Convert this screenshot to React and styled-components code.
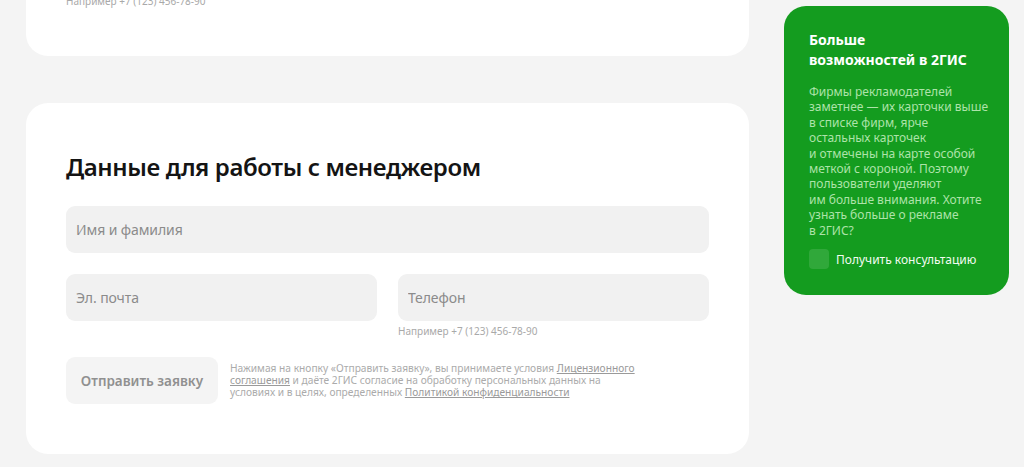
import React from "react";
import styled, { createGlobalStyle } from "styled-components";

const Global = createGlobalStyle`
  html, body { margin: 0; padding: 0; background: #f4f4f4; }
  body { font-family: "Noto Sans", "Open Sans", sans-serif; overflow: hidden; }
  * { box-sizing: border-box; }
`;

const Page = styled.div`
  display: flex;
  align-items: flex-start;
  gap: 35px;
  padding-left: 26px;
  width: 1024px;
  height: 467px;
  overflow: hidden;
`;

const Main = styled.div`
  width: 723px;
  display: flex;
  flex-direction: column;
  gap: 47px;
  margin-top: -80px;
`;

const Card = styled.section`
  background: #fff;
  border-radius: 22px;
  padding: ${(p) => p.$pad};
`;

const Heading = styled.h2`
  margin: 0 0 23px;
  font-size: 24px;
  line-height: 32px;
  font-weight: 600;
  color: #141414;
  letter-spacing: -0.4px;
`;

const Row = styled.div`
  display: grid;
  grid-template-columns: ${(p) => (p.$cols === 2 ? "1fr 1fr" : "1fr")};
  column-gap: 21px;
  margin-bottom: ${(p) => p.$mb || 0}px;
`;

const Field = styled.div`
  display: flex;
  flex-direction: column;
`;

const Input = styled.input`
  height: 47px;
  width: 100%;
  border: none;
  outline: none;
  border-radius: 9px;
  background: #f1f1f1;
  padding: 0 10px;
  font-family: inherit;
  font-size: 14px;
  letter-spacing: -0.1px;
  color: #333;
  &::placeholder { color: #8b8b8b; }
`;

const Hint = styled.div`
  font-size: 10px;
  line-height: 14px;
  color: #a9a9a9;
  margin-top: ${(p) => p.$mt || 3}px;
  white-space: nowrap;
`;

const SubmitRow = styled.div`
  display: flex;
  align-items: flex-start;
  gap: 12px;
  margin-top: 19px;
`;

const SubmitButton = styled.button`
  flex: none;
  width: 152px;
  height: 47px;
  border: none;
  border-radius: 9px;
  background: #f4f4f4;
  color: #909090;
  font-family: inherit;
  font-weight: 600;
  font-size: 13.5px;
  cursor: default;
`;

const Legal = styled.p`
  margin: 5px 0 0;
  font-size: 10.2px;
  line-height: 12px;
  color: #ababab;
  white-space: nowrap;
  a { color: #9a9a9a; text-decoration: underline; }
`;

const Promo = styled.aside`
  width: 225px;
  margin-top: 6px;
  background: #149c1f;
  border-radius: 22px;
  padding: 24px 20px 26px 25px;
`;

const PromoTitle = styled.h3`
  margin: 0 0 14px;
  font-size: 14px;
  line-height: 20px;
  font-weight: 700;
  color: #fff;
`;

const PromoText = styled.p`
  margin: 0 0 11px;
  font-size: 12px;
  line-height: 15.4px;
  color: #ade3a9;
  white-space: nowrap;
`;

const CheckRow = styled.label`
  display: flex;
  align-items: center;
  gap: 7px;
  font-size: 12px;
  color: #f2fbf1;
`;

const CheckBox = styled.span`
  width: 20px;
  height: 20px;
  border-radius: 4px;
  background: rgba(255, 255, 255, 0.12);
`;

export default function App() {
  return (
    <>
      <Global />
      <Page>
        <Main>
          <Card $pad="24px 40px 48px">
            <Row $cols={1}>
              <Input placeholder="Телефон" />
            </Row>
            <Hint $mt={3}>Например +7 (123) 456-78-90</Hint>
          </Card>
          <Card $pad="48px 40px 50px">
            <Heading>Данные для работы с менеджером</Heading>
            <Row $cols={1} $mb={21}>
              <Input placeholder="Имя и фамилия" />
            </Row>
            <Row $cols={2}>
              <Field>
                <Input placeholder="Эл. почта" />
              </Field>
              <Field>
                <Input placeholder="Телефон" />
                <Hint>Например +7 (123) 456-78-90</Hint>
              </Field>
            </Row>
            <SubmitRow>
              <SubmitButton>Отправить заявку</SubmitButton>
              <Legal>
                Нажимая на кнопку «Отправить заявку», вы принимаете условия <a href="#">Лицензионного</a>
                <br />
                <a href="#">соглашения</a> и даёте 2ГИС согласие на обработку персональных данных на
                <br />
                условиях и в целях, определенных <a href="#">Политикой конфиденциальности</a>
              </Legal>
            </SubmitRow>
          </Card>
        </Main>
        <Promo>
          <PromoTitle>
            Больше
            <br />
            возможностей в 2ГИС
          </PromoTitle>
          <PromoText>
            Фирмы рекламодателей
            <br />
            заметнее — их карточки выше
            <br />
            в списке фирм, ярче
            <br />
            остальных карточек
            <br />
            и отмечены на карте особой
            <br />
            меткой с короной. Поэтому
            <br />
            пользователи уделяют
            <br />
            им больше внимания. Хотите
            <br />
            узнать больше о рекламе
            <br />
            в 2ГИС?
          </PromoText>
          <CheckRow>
            <CheckBox />
            Получить консультацию
          </CheckRow>
        </Promo>
      </Page>
    </>
  );
}
